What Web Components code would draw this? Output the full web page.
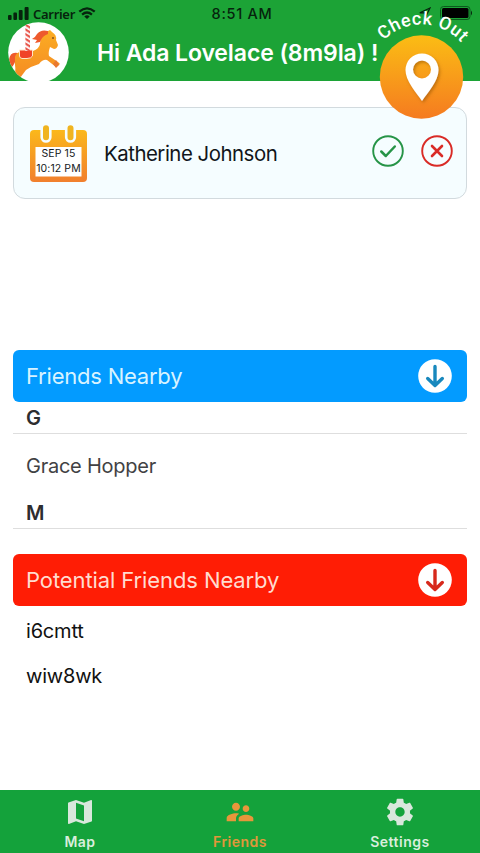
<!DOCTYPE html>
<html lang="en">
<head>
<meta charset="utf-8">
<title>Friends</title>
<style>
html,body{margin:0;height:100%;overflow:hidden;background:#fff}
body{font-family:Inter,"Liberation Sans",sans-serif;color:#111}
</style>
</head>
<body>
<friends-app></friends-app>
<script>
const define=(name,html)=>customElements.define(name,class extends HTMLElement{
  constructor(){super();this.attachShadow({mode:'open'}).innerHTML=html;}
});

define('status-bar',`<style>
:host{display:grid;grid-template-columns:1fr auto 1fr;align-items:center;height:26px;color:#06230d;padding:0 7px 0 7px;font-size:14.5px;font-weight:500}
.l{display:flex;align-items:center}
.carrier{font:600 13px/16px "Noto Sans",sans-serif;margin:1px 3px 0 4px;letter-spacing:-.3px}
.r{display:flex;justify-content:flex-end;align-items:center;gap:9px}
svg{display:block}
time{letter-spacing:.7px;margin-left:4px}
</style>
<div class="l"><svg width="22" height="13" viewBox="0 0 22 13" fill="#06230d"><rect x="1" y="8" width="3.6" height="5" rx="1"/><rect x="6.4" y="5.5" width="3.6" height="7.5" rx="1"/><rect x="11.8" y="3" width="3.8" height="10" rx="1"/><rect x="17.6" y="0" width="4" height="13" rx="1"/></svg>
<span class="carrier">Carrier</span>
<svg width="18" height="13" viewBox="0 0 19 14" fill="none" stroke="#06230d" stroke-width="2.4"><path d="M1.2 5Q9.5-2.2 17.8 5M4.2 8.2Q9.5 3.6 14.8 8.2"/><path d="M9.5 13 6.6 10.2Q9.5 7.8 12.4 10.2Z" fill="#06230d" stroke="none"/></svg></div>
<time>8:51 AM</time>
<div class="r"><svg width="12" height="12" viewBox="0 0 12 12" fill="none" stroke="#06230d" stroke-width="1.2"><path d="M11 1 .8 5.8H6V11Z"/></svg>
<svg width="33" height="14" viewBox="0 0 33 14"><rect x=".5" y=".5" width="29.5" height="13" rx="3" fill="none" stroke="#0b5a1d"/><rect x="2" y="2" width="26.5" height="10" rx="1.5" fill="#000"/><path d="M31 4.5Q33 7 31 9.5Z" fill="#06230d"/></svg></div>`);

define('pony-avatar',`<style>:host{display:block;width:61px;height:61px}svg{display:block}</style>
<svg width="61" height="61" viewBox="0 0 61 61"><defs><clipPath id="c"><circle cx="30.5" cy="30.5" r="30.3"/></clipPath>
<linearGradient id="g" x1="0" y1="0" x2="0" y2="1"><stop offset="0" stop-color="#fbad23"/><stop offset="1" stop-color="#f58a23"/></linearGradient>
<pattern id="p" width="4" height="4" patternUnits="userSpaceOnUse" patternTransform="rotate(32)"><rect width="4" height="4" fill="#fff"/><rect width="4" height="2.2" fill="#e8584d"/></pattern></defs>
<circle cx="30.5" cy="30.5" r="30.3" fill="#fff"/>
<g clip-path="url(#c)">
<path d="M10 31Q2 29 1 38L0 48Q6 45 8 37Z" fill="#f05a2b"/>
<path d="M7 35Q8 30 15 29L25 29Q31 27 32 22Q32 13 38 10L42 8 44 10Q49 13 48 18L50 23Q49 27 46 27L42 25Q40 31 41 34L50 40 52 42 48 45 39 38Q35 37 31 42Q24 44 18 48L12 56 6 58Q8 48 7 43Z" fill="url(#g)"/>
<path d="M40 9Q33 7 29 12Q27 16 24 17L29 18 27 21 32 20Q34 14 40 12Z" fill="#ee5a2d"/>
<path d="M11.500 28H24.500V34Q23 36.500 19 36.500H14Q11.500 36 11.500 34Z" fill="#f04428" stroke="#ffe8c6"/>
<rect x="17.400" y="0" width="4.600" height="29" fill="url(#p)"/>
<path d="m48 38 3 5-3 3-3-4Z" fill="#e97930"/>
<circle cx="45" cy="16" r="1" fill="#87521b"/>
</g></svg>`);

define('check-out-button',`<style>:host{display:block;width:108px;height:112px}svg{display:block;overflow:visible}text{font:500 18px Roboto,sans-serif;fill:#fff}</style>
<svg width="108" height="112" viewBox="0 0 108 112"><defs><linearGradient id="o" x1="0" y1="0" x2="0" y2="1"><stop offset="0" stop-color="#fbbd14"/><stop offset="1" stop-color="#f57b20"/></linearGradient>
<filter id="s" x="-30%" y="-30%" width="170%" height="170%"><feDropShadow dx="1.5" dy="2" stdDeviation="1.5" flood-color="#8a4a00" flood-opacity=".5"/></filter>
<path id="arc" d="M15.700 32.500A52.500 52.500 0 0 1 99 42.800"/></defs>
<circle cx="53.500" cy="69" r="41.700" fill="url(#o)"/>
<path filter="url(#s)" fill="#fff" fill-rule="evenodd" d="M54 45.500A16.500 16.500 0 0 0 37.500 62C37.500 73 48 84 54 93 60 84 70.500 73 70.500 62A16.500 16.500 0 0 0 54 45.500ZM54 52.500A9 9 0 1 1 54 70.500A9 9 0 1 1 54 52.500Z"/>
<text><textPath href="#arc" textLength="87">Check Out</textPath></text></svg>`);

define('app-header',`<style>:host{display:block;position:relative;height:81px;background:#1ca336}
.row{display:flex;align-items:flex-start;padding-left:8px;margin-top:-4px}
h1{margin:16px 0 0 28px;font-size:23px;line-height:30px;font-weight:600;color:#fff;white-space:nowrap;letter-spacing:-.1px}
check-out-button{position:absolute;left:368px;top:8px}</style>
<status-bar></status-bar><div class="row"><pony-avatar></pony-avatar><h1><slot></slot></h1></div><check-out-button></check-out-button>`);

define('calendar-badge',`<style>:host{display:grid;width:57px;height:58px;flex:none}
svg,.t{grid-area:1/1}.t{display:flex;flex-direction:column;align-items:center;padding-top:23px;font-size:10.5px;line-height:14.5px;color:#151a22;white-space:nowrap;letter-spacing:.1px;z-index:1}</style>
<svg width="57" height="58" viewBox="0 0 57 58"><defs><linearGradient id="o" x1="0" y1="0" x2="0" y2="1"><stop offset="0" stop-color="#fbb81b"/><stop offset="1" stop-color="#f17f2d"/></linearGradient></defs>
<rect y="6" width="57" height="52" rx="4" fill="url(#o)"/><rect x="5.500" y="23" width="46" height="29.500" fill="#fff"/>
<g fill="#f0b420" stroke="#f5fdff" stroke-width="2.6"><rect x="11.700" y="0" width="8.600" height="17.500" rx="4.300"/><rect x="36.200" y="0" width="8.600" height="17.500" rx="4.300"/></g></svg>
<div class="t"><span>SEP 15</span><span>10:12 PM</span></div>`);

define('visit-card',`<style>:host{display:flex;align-items:center;box-sizing:border-box;height:92px;border:1px solid #d2dade;border-radius:12px;background:#f5fdff;padding:0 13px 0 16px}
.n{flex:1;margin:1px 0 0 17px;font-size:20.400px;line-height:28px;color:#10151a;letter-spacing:-.48px}
.a{display:flex;gap:17px;margin-top:-4px}svg{display:block}</style>
<calendar-badge></calendar-badge><span class="n"><slot></slot></span><div class="a">
<svg width="32" height="32" viewBox="0 0 32 32" fill="none" stroke="#269447" stroke-width="1.9"><circle cx="16" cy="16" r="14.800"/><path d="m9.300 16.500 4.500 4.500 9-9.500" stroke-width="2.500" stroke-linecap="round" stroke-linejoin="round"/></svg>
<svg width="32" height="32" viewBox="0 0 32 32" fill="none" stroke="#d92b26" stroke-width="1.900"><circle cx="16" cy="16" r="14.800"/><path d="m11 11 10 10M21 11 11 21" stroke-width="2.600" stroke-linecap="round"/></svg></div>`);

define('section-bar',`<style>:host{display:flex;align-items:center;justify-content:space-between;box-sizing:border-box;height:52px;border-radius:6px;background:var(--bar);color:var(--ink);padding:0 15px 0 13px;font-size:22px;letter-spacing:var(--ls)}svg{display:block}path{stroke:var(--arrow)}</style>
<span><slot></slot></span><svg width="34" height="34" viewBox="0 0 34 34"><circle cx="17" cy="17" r="16.800" fill="#fff"/><path d="M17 7.500V26M9.700 19.500 17 26.500 24.300 19.500" fill="none" stroke-width="3.400" stroke-linecap="round" stroke-linejoin="round"/></svg>`);

define('letter-heading',`<style>:host{display:block;box-sizing:border-box;height:32px;border-bottom:1px solid #dedede;padding:3px 13px 0;font-weight:600;font-size:20px;line-height:26px;color:#2d2d2f}</style><slot></slot>`);
define('person-row',`<style>:host{display:flex;align-items:center;padding:0 13px;height:44.500px;font-size:20px;color:var(--name,#111);letter-spacing:var(--ls,-.2px)}</style><slot></slot>`);

const icons={
map:'M20.5 3l-.16.03L15 5.1 9 3 3.360 4.900c-.21.07-.36.25-.36.48V20.500c0 .28.22.5.5.5l.16-.03L9 18.900l6 2.100 5.640-1.900c.21-.07.36-.25.36-.48V3.500c0-.28-.22-.5-.5-.5zM15 19l-6-2.110V5l6 2.110V19z',
friends:'M16.500 12c1.380 0 2.490-1.120 2.490-2.500S17.880 7 16.500 7C15.120 7 14 8.120 14 9.500s1.120 2.500 2.500 2.500zM9 11c1.660 0 2.990-1.340 2.990-3S10.660 5 9 5C7.340 5 6 6.340 6 8s1.340 3 3 3zm7.500 3c-1.830 0-5.500.92-5.500 2.750V19h11v-2.250c0-1.830-3.670-2.750-5.500-2.750zM9 13c-2.330 0-7 1.170-7 3.500V19h7v-2.250c0-.85.33-2.340 2.370-3.470C10.500 13.100 9.660 13 9 13z',
settings:'M19.430 12.980c.04-.32.07-.64.07-.98s-.03-.66-.07-.98l2.110-1.650c.19-.15.24-.42.12-.64l-2-3.460c-.12-.22-.39-.3-.61-.22l-2.490 1c-.52-.4-1.080-.73-1.690-.98l-.38-2.650C14.460 2.180 14.250 2 14 2h-4c-.25 0-.46.18-.49.42l-.38 2.650c-.61.25-1.170.59-1.690.98l-2.490-1c-.23-.09-.49 0-.61.22l-2 3.460c-.13.22-.07.49.12.64l2.110 1.650c-.04.32-.07.65-.07.98s.03.66.07.98l-2.110 1.650c-.19.15-.24.42-.12.64l2 3.460c.12.22.39.3.61.22l2.490-1c.52.4 1.080.73 1.690.98l.38 2.650c.03.24.24.42.49.42h4c.25 0 .46-.18.49-.42l.38-2.650c.61-.25 1.170-.59 1.690-.98l2.490 1c.23.09.49 0 .61-.22l2-3.460c.12-.22.07-.49-.12-.64l-2.110-1.650zM12 15.500c-1.930 0-3.500-1.570-3.500-3.500s1.570-3.500 3.500-3.500 3.500 1.570 3.500 3.500-1.570 3.500-3.500 3.500z'};
customElements.define('tab-item',class extends HTMLElement{
  constructor(){super();this.attachShadow({mode:'open'});}
  connectedCallback(){this.shadowRoot.innerHTML=`<style>:host{display:flex;flex-direction:column;align-items:center;padding-top:6px;gap:4px;font-size:14px;line-height:20px;font-weight:600;letter-spacing:.5px;color:#d9eedd}:host([active]){color:#e2973a}svg{display:block;fill:#d9e7dc}:host([active]) svg{fill:#e8963b}</style><svg width="32" height="32" viewBox="0 0 24 24"><path d="${icons[this.getAttribute('icon')]}"/></svg><span><slot></slot></span>`;}
});
define('tab-bar',`<style>:host{display:grid;grid-template-columns:repeat(3,1fr);height:63px;background:#14a23b}</style><slot></slot>`);

define('friends-app',`<style>
:host{display:flex;flex-direction:column;width:480px;height:853px;background:#fff;overflow:hidden}
main{flex:1;padding:26px 13px 0;display:flex;flex-direction:column}
.near{--bar:#039bff;--ink:#d8f3ff;--arrow:#1888bd;--ls:-.22px;margin-top:151px}
.pot{--bar:#ff1d05;--ink:#ffdcd0;--arrow:#d7291c;--ls:-.1px;margin-top:25px}
.g{--name:#414143;--ls:-.25px;height:63px}
.others{padding-top:3px}
</style>
<app-header>Hi Ada Lovelace (8m9la) !</app-header>
<main><visit-card>Katherine Johnson</visit-card>
<section-bar class="near">Friends Nearby</section-bar>
<letter-heading>G</letter-heading><person-row class="g">Grace Hopper</person-row><letter-heading>M</letter-heading>
<section-bar class="pot">Potential Friends Nearby</section-bar>
<div class="others"><person-row>i6cmtt</person-row><person-row>wiw8wk</person-row></div></main>
<tab-bar><tab-item icon="map">Map</tab-item><tab-item icon="friends" active>Friends</tab-item><tab-item icon="settings">Settings</tab-item></tab-bar>`);
</script>
</body>
</html>
